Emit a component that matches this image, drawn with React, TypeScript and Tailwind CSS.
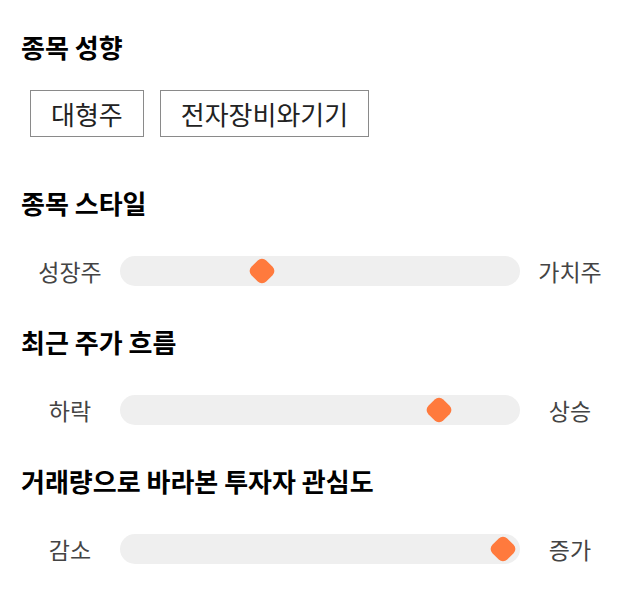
import React from 'react';

interface SliderRowProps {
  left: string;
  right: string;
  value: number;
}

const tags = ['대형주', '전자장비와기기'];

const sections: { title: string; left: string; right: string; value: number }[] = [
  { title: '종목 스타일', left: '성장주', right: '가치주', value: 0.343 },
  { title: '최근 주가 흐름', left: '하락', right: '상승', value: 0.82 },
  { title: '거래량으로 바라본 투자자 관심도', left: '감소', right: '증가', value: 0.993 },
];

function SliderRow({ left, right, value }: SliderRowProps) {
  return (
    <div className="flex items-center h-10">
      <span className="w-[100px] text-center text-[23px] text-[#444]">{left}</span>
      <div className="relative flex-1 h-[30px] rounded-full bg-[#efefef]">
        {/* thumb */}
        <div
          className="absolute top-1/2 -translate-x-1/2 -translate-y-1/2"
          style={{ left: `calc(14px + (100% - 28px) * ${value})` }}
        >
          <div className="w-[21px] h-[21px] rotate-45 rounded-[6px] bg-[#ff7a3d]" />
        </div>
      </div>
      <span className="w-[100px] text-center text-[23px] text-[#444]">{right}</span>
    </div>
  );
}

export default function App() {
  return (
    <div
      className="w-[640px] h-[606px] bg-white pt-[31px]"
      style={{ fontFamily: '"Noto Sans CJK KR", "Noto Sans", sans-serif' }}
    >
      {/* 종목 성향 */}
      <h2 className="px-[21px] h-8 leading-8 text-[26px] font-bold text-black">종목 성향</h2>
      <div className="flex gap-4 px-[30px] mt-[27px]">
        {tags.map((tag) => (
          <div
            key={tag}
            className="h-[47px] px-5 flex items-center border border-[#8a8a8a] text-[26px] text-[#222]"
          >
            {tag}
          </div>
        ))}
      </div>

      {sections.map((s, i) => (
        <div key={s.title} className={i === 0 ? 'mt-[50px]' : 'mt-[35px]'}>
          <h2 className="px-[21px] h-8 leading-8 text-[26px] font-bold text-black">{s.title}</h2>
          <div className="mt-8 px-5">
            <SliderRow left={s.left} right={s.right} value={s.value} />
          </div>
        </div>
      ))}
    </div>
  );
}
